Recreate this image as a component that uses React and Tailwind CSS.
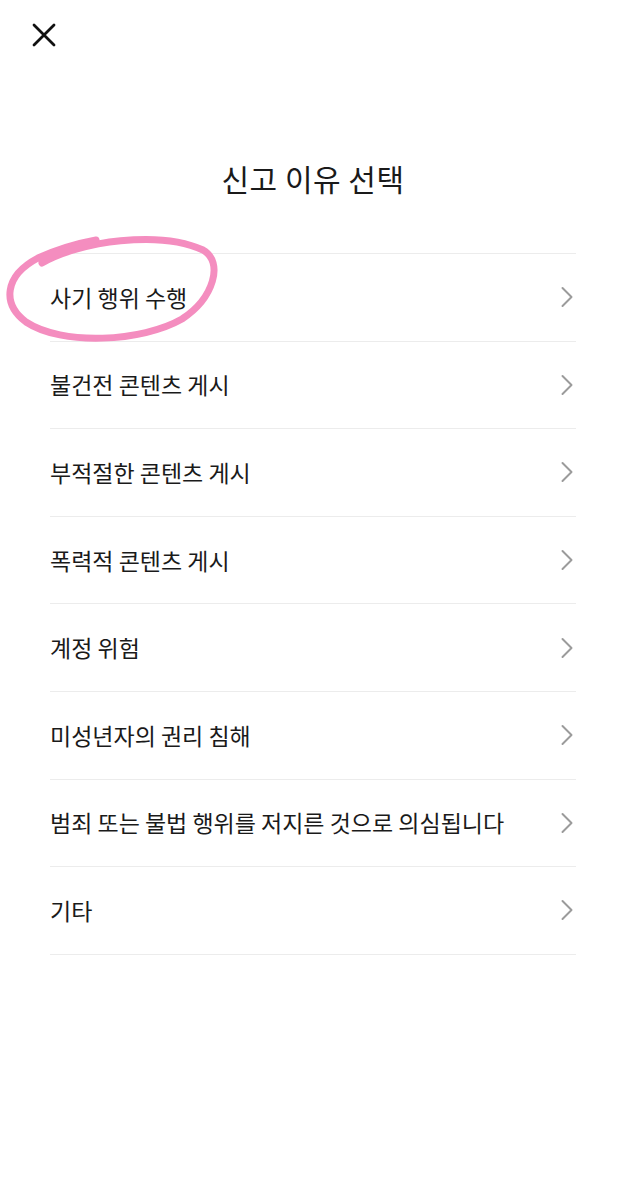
import React from 'react';

const reasons = [
  '사기 행위 수행',
  '불건전 콘텐츠 게시',
  '부적절한 콘텐츠 게시',
  '폭력적 콘텐츠 게시',
  '계정 위험',
  '미성년자의 권리 침해',
  '범죄 또는 불법 행위를 저지른 것으로 의심됩니다',
  '기타',
];

const Chevron = () => (
  <svg width="14" height="22" viewBox="0 0 14 22" fill="none">
    <path d="M2.5 2l9 9-9 9" stroke="#9b9b9b" strokeWidth="2" strokeLinecap="round" strokeLinejoin="round" />
  </svg>
);

export default function App() {
  return (
    <div
      className="relative w-full h-[1200px] bg-white text-[#1a1a1a]"
      style={{ fontFamily: '"Noto Sans CJK KR", "Noto Sans", sans-serif' }}
    >
      {/* top bar */}
      <div className="h-[68px] pl-[32px] pt-[23px]">
        <svg width="24" height="24" viewBox="0 0 24 24" fill="none">
          <path d="M2 2l20 20M22 2L2 22" stroke="#111" strokeWidth="2.8" strokeLinecap="round" />
        </svg>
      </div>

      <h1 className="pt-[92px] h-[128px] text-center text-[30px] leading-[36px] font-normal tracking-[0.5px]">
        신고 이유 선택
      </h1>

      <ul className="mt-[57px] mx-[50px] border-t border-[#ececec]">
        {reasons.map((r) => (
          <li
            key={r}
            className="h-[87.6px] flex items-center justify-between border-b border-[#ececec] pr-[2px]"
          >
            <span className="text-[23px] leading-none">{r}</span>
            <Chevron />
          </li>
        ))}
      </ul>

      {/* hand-drawn highlight */}
      <svg className="absolute left-0 top-0 pointer-events-none" width="240" height="360" viewBox="0 0 240 360" fill="none">
        <path
          d="M42 263 C 80 241, 160 230, 203 250 C 224 262, 214 298, 182 319 C 142 342, 62 346, 26 322 C 2 304, 4 276, 38 258 C 56 250, 74 244, 96 240"
          stroke="#f48dbf"
          strokeWidth="7"
          strokeLinecap="round"
          strokeLinejoin="round"
        />
      </svg>
    </div>
  );
}
